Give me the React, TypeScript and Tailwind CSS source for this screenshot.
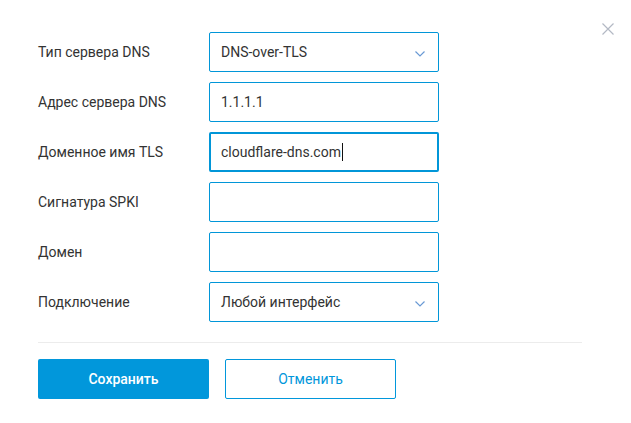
import type { FC } from 'react'

const Chevron = () => (
  <svg width="12" height="8" viewBox="0 0 12 8" fill="none" className="absolute right-[12px] top-[17px]">
    <path d="M1.5 1.5l4.5 4.5 4.5-4.5" stroke="#6a9ad4" strokeWidth="1.2" />
  </svg>
)

const Row: FC<{ label: string; value?: string; select?: boolean; focused?: boolean }> = ({
  label,
  value,
  select,
  focused,
}) => (
  <div className="flex h-10 items-center">
    <div className="w-[171px] text-[14px] text-[#333]">{label}</div>
    <div
      className={
        focused
          ? 'relative flex h-10 w-[230px] items-center rounded-[2px] border-2 border-[#0196d8] px-[10px] text-[14px] text-[#333]'
          : 'relative flex h-10 w-[230px] items-center rounded-[2px] border border-[#0196d8] px-[11px] text-[14px] text-[#333]'
      }
    >
      {value}
      {focused && <span className="ml-px h-[18px] w-px bg-[#111]" />}
      {select && <Chevron />}
    </div>
  </div>
)

export default function App() {
  return (
    <div className="relative h-[423px] w-[631px] bg-white font-['Roboto',sans-serif]">
      <svg width="12" height="12" viewBox="0 0 12 12" className="absolute left-[602px] top-[23px]">
        <path d="M0.5 0.5l11 11M11.5 0.5l-11 11" stroke="#b3b9c4" strokeWidth="1.2" />
      </svg>
      <div className="flex flex-col px-[38px] pt-8">
        <div className="flex flex-col gap-[10px]">
          <Row label="Тип сервера DNS" value="DNS-over-TLS" select />
          <Row label="Адрес сервера DNS" value="1.1.1.1" />
          <Row label="Доменное имя TLS" value="cloudflare-dns.com" focused />
          <Row label="Сигнатура SPKI" />
          <Row label="Домен" />
          <Row label="Подключение" value="Любой интерфейс" select />
        </div>
        <div className="mt-5 h-px w-[544px] bg-[#ececec]" />
        <div className="mt-4 flex gap-[16px]">
          <button className="h-10 w-[171px] rounded-[2px] bg-[#0197db] text-[14px] font-medium text-white">
            Сохранить
          </button>
          <button className="h-10 w-[171px] rounded-[2px] border border-[#0197db] bg-white text-[14px] text-[#0197db]">
            Отменить
          </button>
        </div>
      </div>
    </div>
  )
}
